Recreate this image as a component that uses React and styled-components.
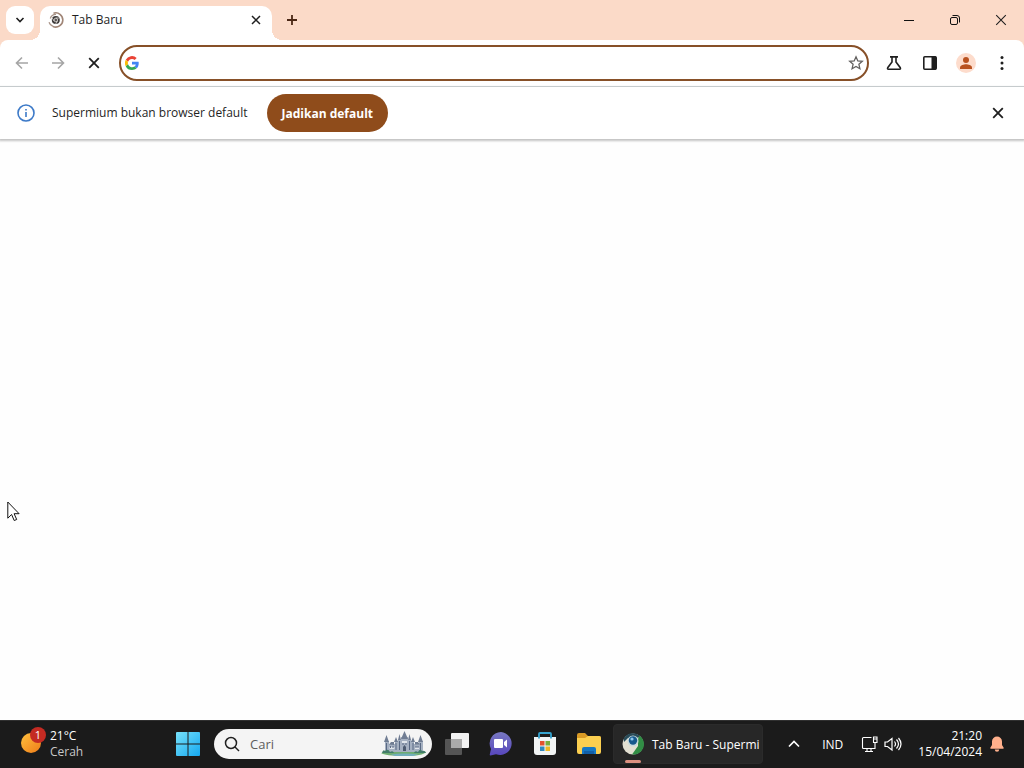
import React from "react";
import styled, { createGlobalStyle } from "styled-components";

const GlobalStyle = createGlobalStyle`
  * { box-sizing: border-box; }
  body {
    margin: 0;
    background: #fefefe;
    font-family: "Open Sans", "Noto Sans", sans-serif;
    font-size: 12px;
    color: #1f1f1f;
  }
  button, input { font: inherit; color: inherit; }
`;

const Desktop = styled.div`
  position: relative;
  display: flex;
  flex-direction: column;
  min-height: 100vh;
`;

const BrowserWindow = styled.main`
  display: flex;
  flex-direction: column;
  flex: 1;
  background: #fbdac8;
`;

const TabStrip = styled.header`
  display: flex;
  height: 40px;
  padding-left: 6px;
`;

const PlainButton = styled.button`
  display: flex;
  align-items: center;
  justify-content: center;
  flex: none;
  padding: 0;
  border: 0;
  background: transparent;
`;

const TabSearchButton = styled(PlainButton)`
  width: 28px;
  height: 28px;
  margin: 6px 6px 0 0;
  border-radius: 9px;
  background: #fff;
`;

const Tab = styled.div`
  position: relative;
  display: flex;
  align-items: center;
  width: 232px;
  height: 34px;
  margin-top: 6px;
  padding: 0 6px 6px 8px;
  border-radius: 10px 10px 0 0;
  background: #fff;

  &::before,
  &::after {
    content: "";
    position: absolute;
    bottom: 0;
    width: 10px;
    height: 10px;
  }
  &::before {
    right: 100%;
    background: radial-gradient(circle at 0 0, transparent 10px, #fff 10px);
  }
  &::after {
    left: 100%;
    background: radial-gradient(circle at 100% 0, transparent 10px, #fff 10px);
  }
`;

const TabTitle = styled.span`
  flex: 1;
  margin-left: 8px;
  line-height: 18px;
`;

const TabCloseButton = styled(PlainButton)`
  width: 20px;
  height: 20px;
`;

const NewTabButton = styled(PlainButton)`
  width: 28px;
  height: 28px;
  margin: 6px 0 0 6px;
`;

const WindowControls = styled.div`
  display: flex;
  margin-left: auto;
`;

const WindowButton = styled(PlainButton)`
  width: 46px;
  height: 40px;
`;

const Toolbar = styled.div`
  display: flex;
  align-items: center;
  gap: 8px;
  height: 47px;
  padding: 0 8px;
  border-bottom: 1px solid #c8ced1;
  border-radius: 8px 8px 0 0;
  background: #fff;
`;

const ToolButton = styled(PlainButton)`
  width: 28px;
  height: 28px;
  color: ${(p) => (p.$muted ? "#a5a5a5" : "#1f1f1f")};
`;

const AddressBar = styled.label`
  display: flex;
  align-items: center;
  flex: 1;
  height: 36px;
  margin: 0 3px;
  padding: 0 3px 0 4px;
  border: 2px solid #875028;
  border-radius: 18px;
  background: #fff;
`;

const AddressInput = styled.input`
  flex: 1;
  min-width: 0;
  height: 28px;
  margin-left: 8px;
  padding: 0;
  border: 0;
  outline: 0;
  background: transparent;
`;

const StarButton = styled(PlainButton)`
  width: 16px;
  height: 16px;
`;

const InfoBar = styled.section`
  display: flex;
  align-items: center;
  height: 52px;
  padding: 0 12px 0 16px;
  background: #fff;
  box-shadow: 0 1px 2px 1px #c4c4c4;
  z-index: 1;
`;

const InfoText = styled.span`
  margin: 0 19px 0 16px;
  line-height: 20px;
`;

const DefaultButton = styled.button`
  height: 38px;
  padding: 0 15px;
  border: 0;
  border-radius: 19px;
  background: #8f4c1b;
  color: #fff;
  font-weight: 700;
`;

const InfoCloseButton = styled(PlainButton)`
  width: 28px;
  height: 28px;
  margin-left: auto;
`;

const PageContent = styled.div`
  flex: 1;
  background: #fefefe;
`;

const Taskbar = styled.footer`
  display: flex;
  align-items: center;
  height: 48px;
  background: #1b1b1b;
  box-shadow: inset 0 1px #303030;
  color: #fff;
`;

const WeatherButton = styled(PlainButton)`
  justify-content: flex-start;
  gap: 4px;
  width: 166px;
  height: 48px;
  padding-left: 20px;
  text-align: left;
`;

const WeatherText = styled.span`
  display: flex;
  flex-direction: column;
  line-height: 16px;
`;

const Condition = styled.span`
  color: #c8c8c8;
`;

const TaskButton = styled(PlainButton)`
  width: 44px;
  height: 40px;
`;

const SearchBox = styled.label`
  display: flex;
  align-items: center;
  width: 218px;
  height: 30px;
  margin: 0 3px 0 4px;
  padding: 0 5px 0 10px;
  border-radius: 15px;
  background: #f4f4f4;
`;

const SearchInput = styled.input`
  flex: 1;
  min-width: 0;
  margin-left: 10px;
  padding: 0;
  border: 0;
  outline: 0;
  background: transparent;
  font-size: 13px;
  &::placeholder { color: #5d5d5d; opacity: 1; }
`;

const RunningTask = styled.button`
  position: relative;
  display: flex;
  align-items: center;
  gap: 8px;
  width: 150px;
  height: 40px;
  margin-left: 2px;
  padding: 0 0 0 8px;
  border: 1px solid #2b2b2b;
  border-radius: 4px;
  background: #272727;
  color: #fff;
  white-space: nowrap;

  svg { flex: none; }

  &::after {
    content: "";
    position: absolute;
    bottom: 0;
    left: 11px;
    width: 16px;
    height: 3px;
    border-radius: 2px;
    background: #dd9080;
  }
`;

const Tray = styled.div`
  display: flex;
  align-items: center;
  margin-left: auto;
  padding-right: 20px;
`;

const Language = styled.span`
  margin: 0 18px 0 21px;
`;

const TrayIcons = styled.div`
  display: flex;
  align-items: center;
  gap: 6px;
`;

const Clock = styled.div`
  margin: 0 8px 0 16px;
  line-height: 16px;
  text-align: right;
`;

const Pointer = styled.svg`
  position: absolute;
  top: 501px;
  left: 7px;
  z-index: 2;
`;

const Cross = ({ size = 10, width = 2 }) => (
  <svg width={size} height={size} viewBox="0 0 10 10" fill="none" stroke="currentColor" strokeWidth={width}>
    <path d="M1 1l8 8M9 1l-8 8" />
  </svg>
);

const Favicon = () => (
  <svg width="16" height="16" viewBox="0 0 16 16" fill="none">
    <path d="M5.500 1.200A7.100 7.100 0 1 1 5 14.500" stroke="#a08576" strokeWidth="1.600" />
    <path d="M2.300 6.500A5.800 5.800 0 0 1 8 2.400M1 10.200A7 7 0 0 0 5 14.400" stroke="#a99488" strokeWidth="1.300" />
    <circle cx="7.800" cy="8" r="4" fill="#3f3c3b" />
    <circle cx="7.800" cy="8" r="1.800" fill="#5a5655" stroke="#e6e2df" strokeWidth=".8" />
    <path d="M7.800 6h3.800M6 9L4.100 5.800M9.500 9l-2 3.200" stroke="#d8d3cf" strokeWidth=".8" />
  </svg>
);

const GoogleMark = () => (
  <svg width="14" height="14" viewBox="0 0 48 48">
    <path fill="#ea4335" d="M24 10c3.500 0 6.600 1.200 9 3.500l7-7A24 24 0 0 0 2.600 13.200l8 6.300C12.500 13.800 17.800 10 24 10z" />
    <path fill="#4285f4" d="M47 24.500c0-1.600-.2-3.100-.4-4.500H24v9h13c-.6 3-2.300 5.500-4.800 7.200l7.700 6C44.400 38 47 32 47 24.500z" />
    <path fill="#fbbc05" d="M10.500 28.600A14.500 14.500 0 0 1 10.500 19.500l-8-6.300a24 24 0 0 0 0 21.600z" />
    <path fill="#34a853" d="M24 48c6.500 0 12-2.100 15.900-5.800l-7.700-6A14.300 14.300 0 0 1 10.500 28.600l-8 6.200A24 24 0 0 0 24 48z" />
  </svg>
);

const Arrow = ({ forward }) => (
  <svg width="14" height="14" viewBox="0 0 14 14" fill="none" stroke="currentColor" strokeWidth="1.600">
    <path d={forward ? "M1 7h11M7 1.500L12.500 7 7 12.500" : "M13 7H2M7 1.500L1.500 7 7 12.500"} />
  </svg>
);

const Castle = () => (
  <svg width="46" height="26" viewBox="0 0 46 26">
    <path d="M0 22q12-3 23-2 13-1 22 1-3 4-22 4T0 22z" fill="#6eac72" />
    <path d="M10 23.500q13-2 27 0l-5 1.500H14z" fill="#72aebc" />
    <path d="M4 21V10h4v3h6v-3h3V9h3V6h7v3h3v1h3v3h5v-3h4v11z" fill="#a5b0c1" />
    <path d="M3 11l2.500-7L8 11zM13 11l2-5 2 5zM17 9l1.500-6L20 9zM20 8l3.500-8L27 8zM27 9l1.500-6L30 9zM30 11l2-5 2 5zM37 11l2.500-7 2.500 7zM8 13.500l2-2.500h3v3zM34 13.500V11h3l2 2.500z" fill="#707d93" />
    <path d="M5.500 12v7M15 12v7M18.500 10v9M28.500 10v9M32 12v7M39.500 12v7" fill="none" stroke="#596984" strokeWidth="1" />
    <path d="M8.500 17h5M34 17h4M21 11h5" stroke="#e0e5eb" strokeWidth="2" />
    <path d="M9.500 15v2M12 15v2M35 15v2M37 15v2M22 12v2M25 12v2" stroke="#5f6d87" />
    <path d="M22 20v-4l1.500-2 1.500 2v4z" fill="#4d5a70" />
    <path d="M1 22q1-4 3-2 3-3 5 1 3-2 4 1zM33 22q1-3 4-1 2-4 4-1 3-1 4 2z" fill="#427c68" />
  </svg>
);

const WeatherIcon = () => (
  <svg width="26" height="40" viewBox="0 -5 26 40">
    <defs>
      <linearGradient id="sun" x1="0" y1="0" x2="1" y2="1">
        <stop stopColor="#ffc13d" />
        <stop offset="1" stopColor="#ee7b19" />
      </linearGradient>
    </defs>
    <circle cx="11" cy="14" r="10" fill="url(#sun)" />
    <circle cx="18" cy="6" r="8" fill="#c42b23" />
    <text x="18" y="10" fill="#fff" fontSize="11" textAnchor="middle">1</text>
  </svg>
);

const WindowsLogo = () => (
  <svg width="24" height="24" viewBox="0 0 24 24">
    <defs>
      <linearGradient id="win" x1="0" y1="0" x2="1" y2="1">
        <stop stopColor="#77e1fa" />
        <stop offset="1" stopColor="#15a8f0" />
      </linearGradient>
    </defs>
    <path d="M1 0h10.500v11.500H0V1a1 1 0 0 1 1-1zM12.500 0H23a1 1 0 0 1 1 1v10.500H12.500zM0 12.500h11.500V24H1a1 1 0 0 1-1-1zM12.500 12.500H24V23a1 1 0 0 1-1 1H12.500z" fill="url(#win)" />
  </svg>
);

const TaskView = () => (
  <svg width="24" height="24" viewBox="0 0 24 24">
    <rect x="6" y="1" width="18" height="15" rx="1" fill="#f2f2f2" />
    <rect x="0" y="7" width="17" height="16" rx="1" fill="#555" />
    <path d="M6 7h11v9H6z" fill="#aaa" />
  </svg>
);

const Chat = () => (
  <svg width="24" height="24" viewBox="0 0 24 24">
    <defs>
      <linearGradient id="chat" x1="0" y1="0" x2="0" y2="1">
        <stop stopColor="#7878c2" />
        <stop offset="1" stopColor="#5746bd" />
      </linearGradient>
    </defs>
    <path d="M12 0a11.500 11.500 0 1 1-5 22.200L1.500 23.500q-1 0-.7-1.200L2 17A11.500 11.500 0 0 1 12 0z" fill="url(#chat)" />
    <rect x="5" y="7" width="9" height="9" rx="1" fill="#fff" />
    <path d="M15 10l3-2.500v8L15 13z" fill="#fff" />
  </svg>
);

const Store = () => (
  <svg width="24" height="24" viewBox="0 0 24 24">
    <path d="M1 5h22v15a3 3 0 0 1-3 3H4a3 3 0 0 1-3-3z" fill="#f2f4f5" />
    <path d="M6 6.500V2a1 1 0 0 1 1-1h10a1 1 0 0 1 1 1v4.500" fill="none" stroke="#35a3cf" strokeWidth="1.800" />
    <path d="M7 9h4.500v4.500H7z" fill="#e4522d" />
    <path d="M12.500 9H17v4.500h-4.500z" fill="#79ad3c" />
    <path d="M7 14.500h4.500V19H7z" fill="#3189bd" />
    <path d="M12.500 14.500H17V19h-4.500z" fill="#efb923" />
  </svg>
);

const Explorer = () => (
  <svg width="26" height="24" viewBox="0 0 26 24">
    <path d="M1 3q0-2 2-2h6l3 3h11q2 0 2 2v14H1z" fill="#d99a25" />
    <path d="M1 6h8l3-2h11q2 0 2 2v14q0 2-2 2H3q-2 0-2-2z" fill="#fbcf50" />
    <path d="M6 22v-5q0-2 2-2h10q2 0 2 2v5z" fill="#1678c4" />
    <path d="M8 19h10v3H8z" fill="#125fa8" />
  </svg>
);

const SupermiumLogo = () => (
  <svg width="22" height="22" viewBox="0 0 22 22">
    <circle cx="11" cy="11" r="10.500" fill="#e3e0d2" />
    <path d="M1.500 6a10.500 10.500 0 0 1 17.500-2L14 5 6 5 2 9z" fill="#294b59" />
    <path d="M17.500 2.500a10.500 10.500 0 0 1-7.500 19l6-8.500V6z" fill="#318d45" />
    <circle cx="11" cy="8" r="5.500" fill="#c9dadd" />
    <circle cx="11" cy="7.500" r="4.200" fill="#17598d" />
    <circle cx="10" cy="6" r="1.600" fill="#8cc7ed" />
  </svg>
);

export default function App() {
  return (
    <Desktop>
      <GlobalStyle />
      <BrowserWindow>
        <TabStrip>
          <TabSearchButton aria-label="Telusuri tab">
            <svg width="10" height="8" viewBox="0 0 10 8" fill="none" stroke="currentColor" strokeWidth="1.600"><path d="M1.500 2L5 5.500 8.500 2" /></svg>
          </TabSearchButton>
          <Tab>
            <Favicon />
            <TabTitle>Tab Baru</TabTitle>
            <TabCloseButton aria-label="Tutup tab"><Cross size={10} width={1.5} /></TabCloseButton>
          </Tab>
          <NewTabButton aria-label="Tab baru">
            <svg width="12" height="12" viewBox="0 0 12 12" stroke="#4b2715" strokeWidth="1.800"><path d="M6 1v10M1 6h10" /></svg>
          </NewTabButton>
          <WindowControls>
            <WindowButton aria-label="Minimalkan">
              <svg width="10" height="10" viewBox="0 0 10 10" stroke="#111"><path d="M0 5.500h10" /></svg>
            </WindowButton>
            <WindowButton aria-label="Pulihkan">
              <svg width="10" height="10" viewBox="0 0 10 10" fill="none" stroke="#111"><rect x=".5" y="2.500" width="7" height="7" rx="1.500" /><path d="M2.500.5H7A2.500 2.500 0 0 1 9.500 3v4.500" /></svg>
            </WindowButton>
            <WindowButton aria-label="Tutup"><Cross size={12} width={0.9} /></WindowButton>
          </WindowControls>
        </TabStrip>
        <Toolbar>
          <ToolButton $muted aria-label="Kembali"><Arrow /></ToolButton>
          <ToolButton $muted aria-label="Maju"><Arrow forward /></ToolButton>
          <ToolButton aria-label="Berhenti"><Cross size={12} width={1.5} /></ToolButton>
          <AddressBar>
            <GoogleMark />
            <AddressInput type="text" aria-label="Kolom URL" />
            <StarButton aria-label="Bookmark">
              <svg width="16" height="16" viewBox="0 0 16 16" fill="none" stroke="#62605f" strokeWidth="1.300"><path d="M8 1.800l1.800 4.100 4.500.4-3.400 3 1 4.400L8 11.400l-3.900 2.300 1-4.400-3.400-3 4.500-.4z" /></svg>
            </StarButton>
          </AddressBar>
          <ToolButton aria-label="Eksperimen">
            <svg width="16" height="16" viewBox="0 0 16 16" fill="none" stroke="currentColor" strokeWidth="1.600"><path d="M4 1.900h8M6 2v5l-4.300 5.700q-.6 1.400.8 1.500h11q1.400-.1.800-1.500L10 7V2" /></svg>
          </ToolButton>
          <ToolButton aria-label="Panel samping">
            <svg width="16" height="16" viewBox="0 0 16 16"><rect x="1.800" y="1.800" width="12.400" height="12.400" rx="1" fill="none" stroke="currentColor" strokeWidth="1.600" /><path d="M9.500 1.500H14v13H9.500z" fill="currentColor" /></svg>
          </ToolButton>
          <ToolButton aria-label="Profil">
            <svg width="20" height="20" viewBox="0 0 20 20"><circle cx="10" cy="10" r="10" fill="#fddccc" /><circle cx="10" cy="7" r="3" fill="#b95220" /><path d="M4 16v-1.500C4 12 8 11.200 10 11.200s6 .8 6 3.300V16z" fill="#b95220" /></svg>
          </ToolButton>
          <ToolButton aria-label="Menu">
            <svg width="4" height="16" viewBox="0 0 4 16" fill="currentColor"><circle cx="2" cy="2.500" r="1.500" /><circle cx="2" cy="8" r="1.500" /><circle cx="2" cy="13.500" r="1.500" /></svg>
          </ToolButton>
        </Toolbar>
        <InfoBar>
          <svg width="20" height="20" viewBox="0 0 20 20"><circle cx="10" cy="10" r="8" fill="none" stroke="#3d7ac8" strokeWidth="1.600" /><path d="M9.200 9h1.600v5H9.200zM9.200 6h1.600v1.600H9.200z" fill="#3d7ac8" /></svg>
          <InfoText>Supermium bukan browser default</InfoText>
          <DefaultButton>Jadikan default</DefaultButton>
          <InfoCloseButton aria-label="Tutup info"><Cross size={12} width={1.5} /></InfoCloseButton>
        </InfoBar>
        <PageContent />
      </BrowserWindow>
      <Taskbar>
        <WeatherButton>
          <WeatherIcon />
          <WeatherText><span>21°C</span><Condition>Cerah</Condition></WeatherText>
        </WeatherButton>
        <TaskButton aria-label="Mulai"><WindowsLogo /></TaskButton>
        <SearchBox>
          <svg width="16" height="16" viewBox="0 0 16 16" fill="none" stroke="#202020" strokeWidth="1.500"><circle cx="7" cy="7" r="5.500" /><path d="M11 11l4 4" /></svg>
          <SearchInput type="search" aria-label="Cari" placeholder="Cari" />
          <Castle />
        </SearchBox>
        <TaskButton aria-label="Tampilan tugas"><TaskView /></TaskButton>
        <TaskButton aria-label="Chat"><Chat /></TaskButton>
        <TaskButton aria-label="Store"><Store /></TaskButton>
        <TaskButton aria-label="File Explorer"><Explorer /></TaskButton>
        <RunningTask><SupermiumLogo />Tab Baru - Supermi</RunningTask>
        <Tray>
          <PlainButton aria-label="Ikon tersembunyi">
            <svg width="14" height="10" viewBox="0 0 14 10" fill="none" stroke="#fff" strokeWidth="1.700"><path d="M2 7.500l5-5 5 5" /></svg>
          </PlainButton>
          <Language>IND</Language>
          <TrayIcons>
            <svg width="17" height="17" viewBox="0 0 17 17" fill="none" stroke="#fff" strokeWidth="1.100"><path d="M10.500 1.500h-8a1 1 0 0 0-1 1v9a1 1 0 0 0 1 1H14V7M6 13v2.500M10 13v2.500M4 15.500h8M12.500 1h3.500v5.500h-3.500zM12.500 3H16" /></svg>
            <svg width="18" height="16" viewBox="0 0 18 16" fill="none" stroke="#fff" strokeWidth="1.200"><path d="M1 6v4.500h2.500L8 14V2.500L3.500 6zM10.500 5.500q2 2.500 0 5M12.500 3.500q4 4.500 0 9M14.500 2q5 6 0 12" /></svg>
          </TrayIcons>
          <Clock><div>21:20</div><div>15/04/2024</div></Clock>
          <svg width="14" height="16" viewBox="0 0 14 16" fill="#ffb08c"><path d="M7 .5a5 5 0 0 1 5 5V9l1.700 2.700q.3 1-.7 1.100H1q-1-.1-.7-1.100L2 9V5.500a5 5 0 0 1 5-5zM4.800 13.500h4.400a2.200 2.200 0 0 1-4.400 0z" /></svg>
        </Tray>
      </Taskbar>
      <Pointer width="13" height="21" viewBox="0 0 13 21" fill="#fff" stroke="#111"><path d="M.8 1v16.200l3.800-3.700 2.600 6 2.500-1-2.600-5.800h5z" /></Pointer>
    </Desktop>
  );
}
